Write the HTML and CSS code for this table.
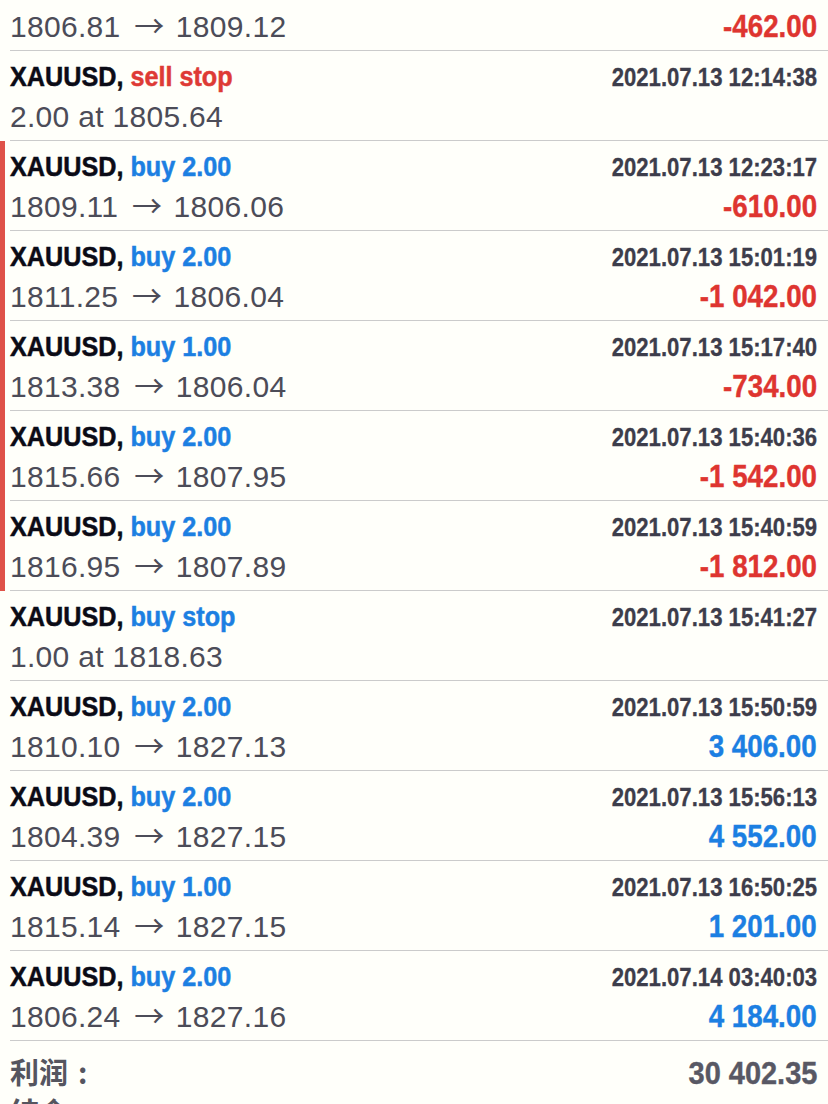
FILE: index.html
```html
<!DOCTYPE html>
<html>
<head>
<meta charset="utf-8">
<link rel="stylesheet" href="styles.css">
</head>
<body>
<div class="list">
  <div class="row first">
    <div class="bar"></div>
    <div class="body">
      <div class="l2"><span class="price">1806.81 <span class="arrow">→</span> 1809.12</span><span class="amt neg">-462.00</span></div>
    </div>
  </div>
  <div class="row">
    <div class="bar"></div>
    <div class="body">
      <div class="l1"><span class="title"><span class="sym">XAUUSD,</span> <span class="sell">sell stop</span></span><span class="date">2021.07.13 12:14:38</span></div>
      <div class="l2"><span class="price">2.00 at 1805.64</span></div>
    </div>
  </div>
  <div class="row loss">
    <div class="bar"></div>
    <div class="body">
      <div class="l1"><span class="title"><span class="sym">XAUUSD,</span> <span class="buy">buy 2.00</span></span><span class="date">2021.07.13 12:23:17</span></div>
      <div class="l2"><span class="price">1809.11 <span class="arrow">→</span> 1806.06</span><span class="amt neg">-610.00</span></div>
    </div>
  </div>
  <div class="row loss">
    <div class="bar"></div>
    <div class="body">
      <div class="l1"><span class="title"><span class="sym">XAUUSD,</span> <span class="buy">buy 2.00</span></span><span class="date">2021.07.13 15:01:19</span></div>
      <div class="l2"><span class="price">1811.25 <span class="arrow">→</span> 1806.04</span><span class="amt neg">-1 042.00</span></div>
    </div>
  </div>
  <div class="row loss">
    <div class="bar"></div>
    <div class="body">
      <div class="l1"><span class="title"><span class="sym">XAUUSD,</span> <span class="buy">buy 1.00</span></span><span class="date">2021.07.13 15:17:40</span></div>
      <div class="l2"><span class="price">1813.38 <span class="arrow">→</span> 1806.04</span><span class="amt neg">-734.00</span></div>
    </div>
  </div>
  <div class="row loss">
    <div class="bar"></div>
    <div class="body">
      <div class="l1"><span class="title"><span class="sym">XAUUSD,</span> <span class="buy">buy 2.00</span></span><span class="date">2021.07.13 15:40:36</span></div>
      <div class="l2"><span class="price">1815.66 <span class="arrow">→</span> 1807.95</span><span class="amt neg">-1 542.00</span></div>
    </div>
  </div>
  <div class="row loss">
    <div class="bar"></div>
    <div class="body">
      <div class="l1"><span class="title"><span class="sym">XAUUSD,</span> <span class="buy">buy 2.00</span></span><span class="date">2021.07.13 15:40:59</span></div>
      <div class="l2"><span class="price">1816.95 <span class="arrow">→</span> 1807.89</span><span class="amt neg">-1 812.00</span></div>
    </div>
  </div>
  <div class="row">
    <div class="bar"></div>
    <div class="body">
      <div class="l1"><span class="title"><span class="sym">XAUUSD,</span> <span class="buy">buy stop</span></span><span class="date">2021.07.13 15:41:27</span></div>
      <div class="l2"><span class="price">1.00 at 1818.63</span></div>
    </div>
  </div>
  <div class="row">
    <div class="bar"></div>
    <div class="body">
      <div class="l1"><span class="title"><span class="sym">XAUUSD,</span> <span class="buy">buy 2.00</span></span><span class="date">2021.07.13 15:50:59</span></div>
      <div class="l2"><span class="price">1810.10 <span class="arrow">→</span> 1827.13</span><span class="amt pos">3 406.00</span></div>
    </div>
  </div>
  <div class="row">
    <div class="bar"></div>
    <div class="body">
      <div class="l1"><span class="title"><span class="sym">XAUUSD,</span> <span class="buy">buy 2.00</span></span><span class="date">2021.07.13 15:56:13</span></div>
      <div class="l2"><span class="price">1804.39 <span class="arrow">→</span> 1827.15</span><span class="amt pos">4 552.00</span></div>
    </div>
  </div>
  <div class="row">
    <div class="bar"></div>
    <div class="body">
      <div class="l1"><span class="title"><span class="sym">XAUUSD,</span> <span class="buy">buy 1.00</span></span><span class="date">2021.07.13 16:50:25</span></div>
      <div class="l2"><span class="price">1815.14 <span class="arrow">→</span> 1827.15</span><span class="amt pos">1 201.00</span></div>
    </div>
  </div>
  <div class="row">
    <div class="bar"></div>
    <div class="body">
      <div class="l1"><span class="title"><span class="sym">XAUUSD,</span> <span class="buy">buy 2.00</span></span><span class="date">2021.07.14 03:40:03</span></div>
      <div class="l2"><span class="price">1806.24 <span class="arrow">→</span> 1827.16</span><span class="amt pos">4 184.00</span></div>
    </div>
  </div>
</div>
<div class="summary">
  <div class="srow"><span class="slabel">利润<span class="colon">:</span></span><span class="sval">30 402.35</span></div>
  <div class="srow"><span class="slabel">结余<span class="colon">:</span></span></div>
</div>
</body>
</html>
```

FILE: styles.css
```css
html, body {
  margin: 0;
  padding: 0;
  background: #fffffa;
  overflow: hidden;
}
body {
  width: 828px;
  height: 1104px;
  font-family: "Liberation Sans", Arial, sans-serif;
}
.row {
  display: flex;
  height: 90px;
}
.row.first {
  height: 51px;
}
.row.first .body {
  padding-top: 8px;
}
.bar {
  width: 5px;
  margin-right: 5px;
  flex: none;
}
.row.loss .bar {
  background: #df5249;
}
.body {
  flex: 1;
  border-bottom: 1px solid #cbcbcb;
  padding-right: 11px;
  padding-top: 5px;
  box-sizing: border-box;
}
.l1 {
  display: flex;
  align-items: baseline;
  height: 42px;
  line-height: 42px;
  white-space: pre;
}
.l2 {
  display: flex;
  align-items: baseline;
  height: 38px;
  line-height: 38px;
  white-space: pre;
}
.title {
  display: inline-block;
  font-weight: bold;
  font-size: 28px;
  transform: scaleX(0.9);
  transform-origin: left center;
  -webkit-text-stroke: 0.5px currentColor;
}
.sym {
  color: #0b0b16;
}
.buy {
  color: #1c7fe2;
}
.sell {
  color: #de3a35;
}
.date {
  display: inline-block;
  margin-left: auto;
  font-weight: bold;
  font-size: 25px;
  color: #3d3d4b;
  transform: scaleX(0.885);
  transform-origin: right center;
  -webkit-text-stroke: 0.3px currentColor;
}
.price {
  font-size: 30px;
  color: #4c4c58;
  letter-spacing: 0.3px;
}
.arrow {
  font-family: "Noto Sans CJK SC", sans-serif;
  font-size: 30px;
  line-height: 0;
  letter-spacing: 0;
  margin: 0 3px 0 5px;
}
.amt {
  display: inline-block;
  margin-left: auto;
  font-weight: bold;
  font-size: 31px;
  transform: scaleX(0.895);
  transform-origin: right center;
  -webkit-text-stroke: 0.4px currentColor;
}
.amt.neg {
  color: #de3530;
}
.amt.pos {
  color: #1c7fe2;
}
.summary {
  padding: 10px 11px 0 10px;
}
.srow {
  display: flex;
  align-items: baseline;
  height: 40px;
  line-height: 40px;
}
.slabel {
  font-family: "Noto Sans CJK SC", sans-serif;
  font-weight: bold;
  font-size: 29px;
  color: #55555f;
}
.colon {
  margin-left: 10px;
}
.sval {
  display: inline-block;
  margin-left: auto;
  font-weight: bold;
  font-size: 32px;
  color: #585864;
  transform: scaleX(0.905);
  transform-origin: right center;
  -webkit-text-stroke: 0.4px currentColor;
}
```
